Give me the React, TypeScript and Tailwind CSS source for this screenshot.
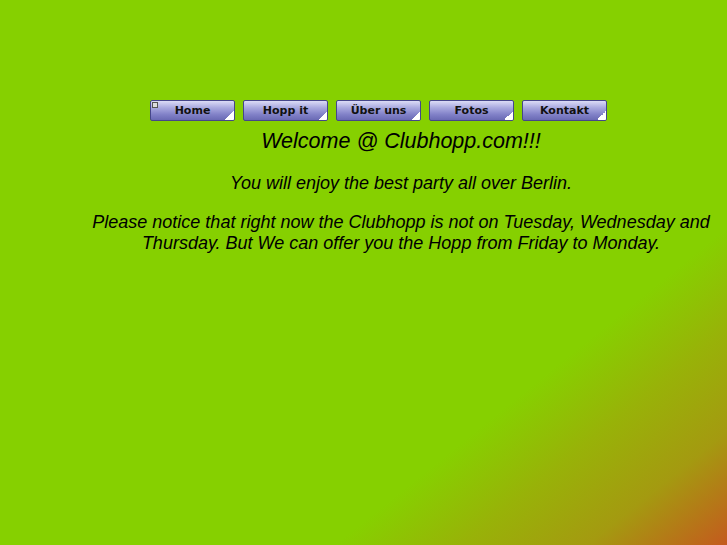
const items = ["Home", "Hopp it", "Über uns", "Fotos", "Kontakt"];

function NavButton({ label, first }: { label: string; first?: boolean }) {
  return (
    <div className="relative h-[21px] w-[85px] overflow-hidden rounded-[2px] border border-[#46468a] bg-[linear-gradient(to_bottom,#dcdcf6_0%,#aaaae0_35%,#8282c8_70%,#6a6ab4_100%)]">
      {first && (
        <span className="absolute left-[1px] top-[1px] h-[6px] w-[6px] border border-[#555] bg-[#ddd]" />
      )}
      <div className="flex h-full items-center justify-center pb-[1px] font-['DejaVu_Sans',Verdana,sans-serif] text-[11px] font-bold not-italic leading-none text-[#111]">
        {label}
      </div>
      <span className="absolute bottom-0 right-0 h-[9px] w-[9px] bg-[linear-gradient(135deg,transparent_50%,#ffffff_50%)]" />
    </div>
  );
}

export default function App() {
  return (
    <div className="h-[545px] w-full overflow-hidden bg-[linear-gradient(141deg,#86d000_0%,#86d000_72%,#98b208_81%,#a49a10_90%,#c45a1e_100%)] font-['Liberation_Sans',Arial,sans-serif] italic text-black">
      <div className="flex gap-[8px] pl-[150px] pt-[100px]">
        {items.map((it, i) => (
          <NavButton key={it} label={it} first={i === 0} />
        ))}
      </div>
      <div className="ml-[81px] w-[640px] text-center">
        <h1 className="mt-[7px] text-[21.5px] leading-[26px]">Welcome @ Clubhopp.com!!!</h1>
        <p className="mt-[19px] text-[18px] leading-[21px]">You will enjoy the best party all over Berlin.</p>
        <p className="mt-[18px] text-[18px] leading-[21px]">
          Please notice that right now the Clubhopp is not on Tuesday, Wednesday and Thursday. But We can offer you the Hopp from Friday to Monday.
        </p>
      </div>
    </div>
  );
}
